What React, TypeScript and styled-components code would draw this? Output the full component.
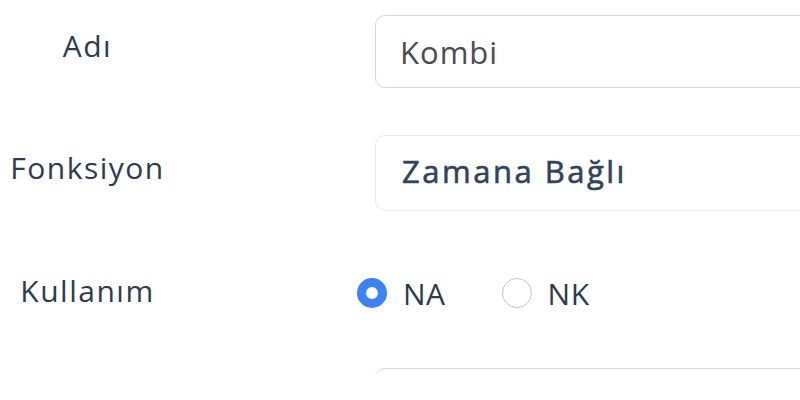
import React from "react";
import styled, { createGlobalStyle } from "styled-components";

const Global = createGlobalStyle`
  html, body { margin: 0; padding: 0; background: #ffffff; overflow: hidden; }
  body { font-family: "Open Sans", "Noto Sans", sans-serif; }
`;

const Page = styled.div`
  width: 1200px;
  height: 400px;
  overflow: hidden;
  padding-top: 15px;
  box-sizing: border-box;
  display: flex;
  flex-direction: column;
`;

const Row = styled.div<{ $h: number; $mb: number }>`
  display: grid;
  grid-template-columns: 175px 700px;
  column-gap: 182px;
  align-items: center;
  flex-shrink: 0;
  height: ${(p) => p.$h}px;
  margin-bottom: ${(p) => p.$mb}px;
`;

const Label = styled.label`
  text-align: center;
  font-size: 30px;
  letter-spacing: 1.5px;
  color: #2e3c4e;
  padding-bottom: 12px;
`;

const Field = styled.input`
  box-sizing: border-box;
  margin: 0 0 0 18px;
  width: 700px;
  height: 100%;
  border: 1.5px solid #d5d8dd;
  border-radius: 10px;
  padding: 0 0 0 24px;
  font-family: "Open Sans", "Noto Sans", sans-serif;
  font-size: 31px;
  letter-spacing: 1px;
  color: #4a4c50;
  background: #fff;
  outline: none;
`;

const SelectBox = styled.div`
  box-sizing: border-box;
  margin-left: 18px;
  width: 700px;
  height: 100%;
  border: 1.5px solid #e8eaed;
  border-radius: 10px;
  padding-left: 26px;
  padding-bottom: 4px;
  display: flex;
  align-items: center;
  font-size: 31px;
  font-weight: 500;
  letter-spacing: 2.5px;
  color: #33435a;
  -webkit-text-stroke: 0.6px #33435a;
`;

const EdgeBox = styled.div`
  box-sizing: border-box;
  margin-left: 18px;
  width: 700px;
  height: 100%;
  border-top: 1.5px solid #d0d5da;
  border-top-left-radius: 10px;
`;

const RadioGroup = styled.div`
  display: flex;
  align-items: center;
  gap: 56px;
  padding-bottom: 6px;
`;

const Option = styled.label`
  display: flex;
  align-items: center;
  gap: 16px;
  font-size: 30px;
  letter-spacing: 0.5px;
  color: #2c3a4c;
`;

const Radio = styled.input`
  appearance: none;
  -webkit-appearance: none;
  margin: 0;
  box-sizing: border-box;
  width: 30px;
  height: 30px;
  border-radius: 50%;
  border: 1.5px solid #c3c7cc;
  background: #fff;
  &:checked {
    border: 9.5px solid #3b82f6;
  }
`;

export default function App() {
  return (
    <>
      <Global />
      <Page>
        <Row $h={73} $mb={47}>
          <Label>Adı</Label>
          <Field defaultValue="Kombi" readOnly />
        </Row>
        <Row $h={76} $mb={47}>
          <Label>Fonksiyon</Label>
          <SelectBox>Zamana Bağlı</SelectBox>
        </Row>
        <Row $h={76} $mb={34}>
          <Label>Kullanım</Label>
          <RadioGroup>
            <Option>
              <Radio type="radio" name="use" defaultChecked />
              NA
            </Option>
            <Option>
              <Radio type="radio" name="use" />
              NK
            </Option>
          </RadioGroup>
        </Row>
        <Row $h={76} $mb={0}>
          <span />
          <EdgeBox />
        </Row>
      </Page>
    </>
  );
}
